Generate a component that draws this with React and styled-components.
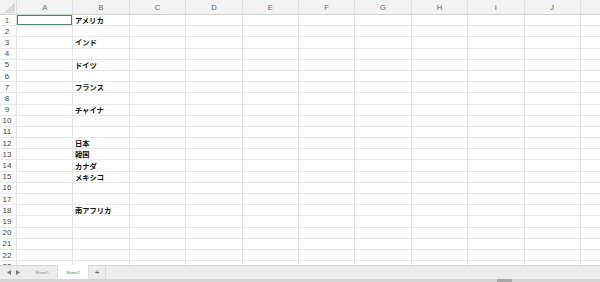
import React from "react";
import styled, { createGlobalStyle } from "styled-components";

const GlobalStyle = createGlobalStyle`
  html, body {
    margin: 0;
    padding: 0;
    background: #ffffff;
    overflow: hidden;
  }
  * {
    box-sizing: border-box;
  }
`;

const COLS = ["A", "B", "C", "D", "E", "F", "G", "H", "I", "J", ""];
const ROW_COUNT = 23;

const values = {
  1: "アメリカ",
  3: "インド",
  5: "ドイツ",
  7: "フランス",
  9: "チャイナ",
  12: "日本",
  13: "韓国",
  14: "カナダ",
  15: "メキシコ",
  18: "南アフリカ",
};

const App = () => {
  const rows = [];
  for (let r = 1; r <= ROW_COUNT; r++) rows.push(r);

  return (
    <>
      <GlobalStyle />
      <Window>
        <SheetArea>
          <Grid>
            <Corner>
              <CornerMark />
            </Corner>
            {COLS.map((c, i) => (
              <ColHeader key={"h" + i} active={c === "A"}>
                {c}
              </ColHeader>
            ))}
            {rows.map((r) => (
              <React.Fragment key={r}>
                <RowHeader active={r === 1}>{r}</RowHeader>
                {COLS.map((c, i) => (
                  <Cell key={c + i} selected={r === 1 && c === "A"}>
                    {c === "B" ? values[r] : null}
                  </Cell>
                ))}
              </React.Fragment>
            ))}
          </Grid>
        </SheetArea>
        <TabBar>
          <Nav>
            <svg width="4" height="5" viewBox="0 0 4 5">
              <path d="M4 0 L0 2.5 L4 5 Z" fill="#7a7a7a" />
            </svg>
            <svg width="4" height="5" viewBox="0 0 4 5">
              <path d="M0 0 L4 2.5 L0 5 Z" fill="#7a7a7a" />
            </svg>
          </Nav>
          <Tab>Sheet1</Tab>
          <Tab active>Sheet2</Tab>
          <AddTab>+</AddTab>
        </TabBar>
        <ScrollStrip>
          <Thumb />
        </ScrollStrip>
      </Window>
    </>
  );
};

export default App;

const Window = styled.div`
  width: 600px;
  height: 282px;
  display: flex;
  flex-direction: column;
  background: #ffffff;
  font-family: "Liberation Sans", "Noto Sans CJK JP", sans-serif;
`;

const SheetArea = styled.div`
  flex: 1;
  overflow: hidden;
`;

const Grid = styled.div`
  display: grid;
  grid-template-columns: 17px repeat(10, 56.4px) 40px;
  grid-template-rows: 15px;
  grid-auto-rows: 11.2px;
`;

const Corner = styled.div`
  position: relative;
  background: #f3f3f3;
  border-right: 1px solid #dcdcdc;
  border-bottom: 1px solid #d2d2d2;
`;

const CornerMark = styled.div`
  position: absolute;
  right: 1px;
  bottom: 1px;
  width: 0;
  height: 0;
  border-left: 11px solid transparent;
  border-bottom: 11px solid #dadada;
`;

const ColHeader = styled.div`
  display: flex;
  align-items: center;
  justify-content: center;
  background: #f3f3f3;
  border-right: 1px solid #e0e0e0;
  border-bottom: 1px solid #d2d2d2;
  font-size: 7.5px;
  color: ${(p) => (p.active ? "#3f8a52" : "#666666")};
`;

const RowHeader = styled.div`
  display: flex;
  align-items: center;
  justify-content: center;
  padding-right: 2px;
  background: #ffffff;
  border-right: 1px solid #e2e2e2;
  border-bottom: 1px solid #e8e8e8;
  font-size: 8px;
  color: ${(p) => (p.active ? "#3f8a52" : "#444444")};
`;

const Cell = styled.div`
  position: relative;
  display: flex;
  align-items: center;
  padding-left: 1.5px;
  border-right: 1px solid #e4e4e4;
  border-bottom: 1px solid #e8e8e8;
  font-family: "Noto Sans CJK JP", sans-serif;
  font-weight: 700;
  font-size: 7.3px;
  color: #111111;
  white-space: nowrap;
  box-shadow: ${(p) => (p.selected ? "inset 0 0 0 1px #4a8a5a" : "none")};
`;

const TabBar = styled.div`
  height: 14px;
  display: flex;
  align-items: stretch;
  background: #ececec;
  border-top: 1px solid #d8d8d8;
`;

const Nav = styled.div`
  width: 27px;
  display: flex;
  align-items: center;
  justify-content: center;
  gap: 5px;
`;

const Tab = styled.div`
  width: 31px;
  display: flex;
  align-items: center;
  justify-content: center;
  font-size: 4.3px;
  color: ${(p) => (p.active ? "#3f8a52" : "#8a8a8a")};
  background: ${(p) => (p.active ? "#ffffff" : "transparent")};
  border-right: 1px solid #dcdcdc;
  margin-top: ${(p) => (p.active ? "-1px" : "0")};
`;

const AddTab = styled.div`
  width: 17px;
  display: flex;
  align-items: center;
  justify-content: center;
  font-size: 8px;
  font-weight: 700;
  color: #7a7a7a;
  border-right: 1px solid #dcdcdc;
`;

const ScrollStrip = styled.div`
  height: 3px;
  position: relative;
  background: #d4d4d4;
`;

const Thumb = styled.div`
  position: absolute;
  left: 497px;
  top: 0;
  width: 15px;
  height: 3px;
  background: #a8a8a8;
`;
